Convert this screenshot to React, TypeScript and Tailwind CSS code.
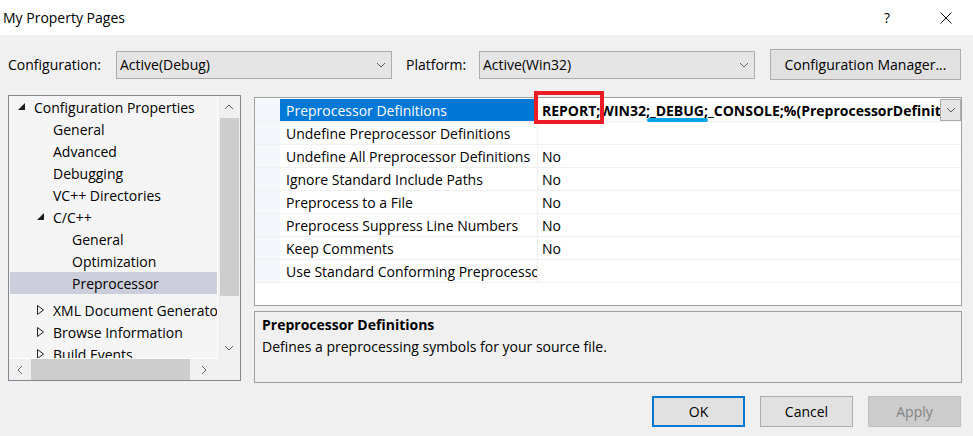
import React from 'react';

type TreeItem = {
  label: string;
  level: number;
  arrow?: 'open' | 'closed';
  selected?: boolean;
  gap?: boolean;
};

const treeItems: TreeItem[] = [
  { label: 'Configuration Properties', level: 0, arrow: 'open' },
  { label: 'General', level: 1 },
  { label: 'Advanced', level: 1 },
  { label: 'Debugging', level: 1 },
  { label: 'VC++ Directories', level: 1 },
  { label: 'C/C++', level: 1, arrow: 'open' },
  { label: 'General', level: 2 },
  { label: 'Optimization', level: 2 },
  { label: 'Preprocessor', level: 2, selected: true },
  { label: 'XML Document Generator', level: 1, arrow: 'closed', gap: true },
  { label: 'Browse Information', level: 1, arrow: 'closed' },
  { label: 'Build Events', level: 1, arrow: 'closed' },
];

const props: { name: string; value: string }[] = [
  { name: 'Preprocessor Definitions', value: '' },
  { name: 'Undefine Preprocessor Definitions', value: '' },
  { name: 'Undefine All Preprocessor Definitions', value: 'No' },
  { name: 'Ignore Standard Include Paths', value: 'No' },
  { name: 'Preprocess to a File', value: 'No' },
  { name: 'Preprocess Suppress Line Numbers', value: 'No' },
  { name: 'Keep Comments', value: 'No' },
  { name: 'Use Standard Conforming Preprocessor', value: '' },
];

function Chevron({ dir = 'down', className = '' }: { dir?: 'down' | 'up' | 'left' | 'right'; className?: string }) {
  const pts = {
    down: '1,3 5,7 9,3',
    up: '1,7 5,3 9,7',
    left: '7,1 3,5 7,9',
    right: '3,1 7,5 3,9',
  }[dir];
  return (
    <svg width="10" height="10" viewBox="0 0 10 10" className={className}>
      <polyline points={pts} fill="none" stroke="currentColor" strokeWidth="1" />
    </svg>
  );
}

function TreeArrow({ kind }: { kind?: 'open' | 'closed' }) {
  if (kind === 'open') {
    return (
      <svg width="8" height="8" viewBox="0 0 8 8">
        <polygon points="7,0 7,7 0,7" fill="#1e1e1e" />
      </svg>
    );
  }
  if (kind === 'closed') {
    return (
      <svg width="8" height="10" viewBox="0 0 8 10">
        <polygon points="0.5,0.5 6.5,5 0.5,9.5" fill="none" stroke="#1e1e1e" strokeWidth="1" />
      </svg>
    );
  }
  return null;
}

function Combo({ value }: { value: string }) {
  return (
    <div className="flex h-[28px] w-[276px] items-center justify-between border border-[#adadad] bg-[#e5e5e5] pl-[3px] pr-[5px]">
      <span>{value}</span>
      <Chevron className="text-[#606060]" />
    </div>
  );
}

export default function App() {
  return (
    <div className="h-[436px] w-[973px] overflow-hidden bg-[#f0f0f0] font-['Open_Sans',sans-serif] text-[14px] text-black">
      {/* title bar */}
      <div className="flex h-[35px] items-center justify-between bg-white pl-[3px]">
        <span>My Property Pages</span>
        <div className="flex items-center">
          <span className="w-[56px]">?</span>
          <svg width="12" height="12" viewBox="0 0 12 12" className="mr-[21px]">
            <path d="M0.5 0.5 L11.5 11.5 M11.5 0.5 L0.5 11.5" stroke="#111" strokeWidth="1" />
          </svg>
        </div>
      </div>

      {/* configuration row */}
      <div className="mt-[14px] flex h-[31px] items-center pl-[8px]">
        <span className="w-[108px]">Configuration:</span>
        <Combo value="Active(Debug)" />
        <span className="ml-[14px] w-[73px]">Platform:</span>
        <Combo value="Active(Win32)" />
        <button className="ml-[15px] flex h-[31px] w-[191px] items-center justify-center border border-[#adadad] bg-[#e1e1e1]">
          Configuration Manager...
        </button>
      </div>

      {/* main area */}
      <div className="mt-[15px] flex pl-[8px]">
        {/* tree */}
        <div className="flex h-[286px] w-[233px] flex-col border border-[#828790] bg-[#f0f0f0]">
          <div className="flex h-[263px]">
            <div className="w-[209px] overflow-hidden border-r border-b border-white bg-[#f5f5f5]">
              {treeItems.map((item, i) => (
                <div
                  key={i}
                  className={
                    'flex h-[22px] items-center whitespace-nowrap ' +
                    (item.selected ? 'ml-px bg-[#cccedb] ' : '') +
                    (item.gap ? 'mt-[5px] ' : '')
                  }
                  style={{ paddingLeft: item.level * 19 + (item.selected ? 8 : 9) }}
                >
                  <span className="flex w-[16px] shrink-0 items-center">
                    <TreeArrow kind={item.arrow} />
                  </span>
                  <span>{item.label}</span>
                </div>
              ))}
            </div>
            <div className="flex w-[22px] flex-col items-center">
              <div className="flex h-[22px] items-center">
                <Chevron dir="up" className="text-[#606060]" />
              </div>
              <div className="h-[178px] w-[19px] bg-[#cdcdcd]" />
              <div className="flex-1" />
              <div className="flex h-[22px] items-center">
                <Chevron dir="down" className="text-[#606060]" />
              </div>
            </div>
          </div>
          <div className="flex h-[21px]">
            <div className="flex w-[22px] items-center justify-center">
              <Chevron dir="left" className="text-[#606060]" />
            </div>
            <div className="w-[159px] bg-[#cdcdcd]" />
            <div className="flex w-[28px] items-center justify-center">
              <Chevron dir="right" className="text-[#606060]" />
            </div>
          </div>
        </div>

        {/* right column */}
        <div className="ml-[13px] mt-[2px] flex w-[708px] flex-col">
          <div className="h-[209px] border border-[#a0a0a0] bg-white pt-px">
            {props.map((p, i) => (
              <div key={i} className="flex h-[23px] border-b border-[#f0f0f0]">
                <div className="w-[25px] shrink-0 bg-[#f4f7fc]" />
                <div
                  className={
                    'flex w-[258px] shrink-0 items-center overflow-hidden whitespace-nowrap border-r border-[#f0f0f0] pl-[6px] ' +
                    (i === 0 ? 'bg-[#0078d7] text-white' : '')
                  }
                >
                  {p.name}
                </div>
                {i === 0 ? (
                  <div className="flex min-w-0 flex-1 items-center">
                    <span className="min-w-0 flex-1 whitespace-nowrap pl-[4px] font-bold [clip-path:inset(-12px_0_-10px_-10px)]">
                      <span className="relative inline-block">
                        REPORT;
                        <span className="absolute top-[-9px] bottom-[-3px] left-[-8px] right-[-4px] border-[4px] border-[#ed1c24]" />
                      </span>
                      WIN32
                      <span className="relative inline-block">
                        ;_DEBUG;
                        <span className="absolute bottom-[-1px] left-[1px] right-0 h-[4px] rounded-full bg-[#00a2e8]" />
                      </span>
                      _CONSOLE;%(PreprocessorDefinitions)
                    </span>
                    <div className="flex h-[22px] w-[21px] shrink-0 items-center justify-center border border-[#adadad] bg-[#e5e5e5]">
                      <Chevron className="text-[#606060]" />
                    </div>
                  </div>
                ) : (
                  <div className="flex min-w-0 flex-1 items-center pl-[4px]">{p.value}</div>
                )}
              </div>
            ))}
          </div>
          <div className="mt-[5px] h-[72px] border border-[#a0a0a0] px-[7px] pt-[3px]">
            <div className="font-bold leading-[20px]">Preprocessor Definitions</div>
            <div className="mt-[2px] leading-[20px]">Defines a preprocessing symbols for your source file.</div>
          </div>
        </div>
      </div>

      {/* buttons */}
      <div className="mt-[13px] flex justify-end gap-[15px] pr-[12px]">
        <button className="h-[31px] w-[93px] border-2 border-[#0078d7] bg-[#e1e1e1]">OK</button>
        <button className="h-[31px] w-[93px] border border-[#adadad] bg-[#e1e1e1]">Cancel</button>
        <button className="h-[31px] w-[93px] border border-[#bfbfbf] bg-[#cccccc] text-[#838383]">Apply</button>
      </div>
    </div>
  );
}
